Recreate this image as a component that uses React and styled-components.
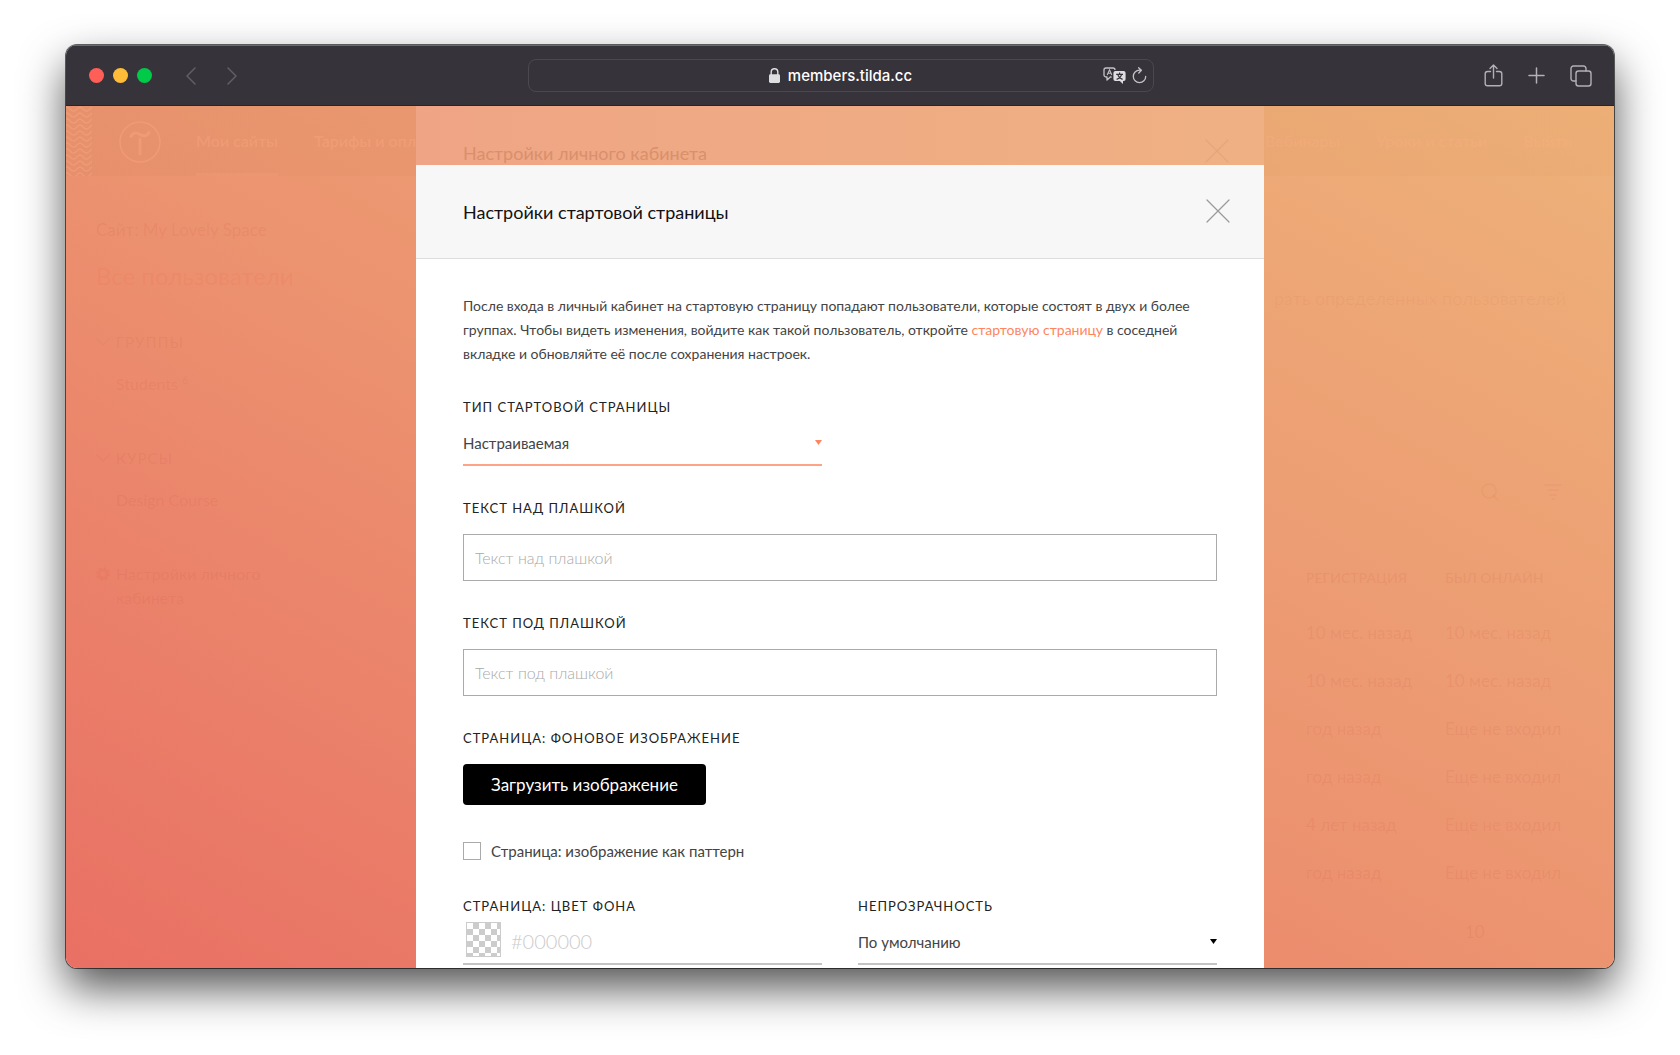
import React from 'react';
import styled, { createGlobalStyle } from 'styled-components';

const GlobalStyle = createGlobalStyle`
  * {
    box-sizing: border-box;
  }
  body {
    margin: 0;
    background-color: #fff;
    font-family: Lato, 'Noto Sans', sans-serif;
    font-size: 16px;
    color: #444;
  }
  button, input, select {
    font-family: inherit;
    margin: 0;
  }
`;

const Desktop = styled.div`
  min-height: 100vh;
  padding: 45px 66px 87px;
  display: flex;
  flex-direction: column;
`;

const BrowserWindow = styled.div`
  flex: 1;
  display: flex;
  flex-direction: column;
  border-radius: 11px;
  overflow: hidden;
  box-shadow: 0 0 0 1px rgba(0, 0, 0, 0.6), 0 20px 44px rgba(0, 0, 0, 0.68);
`;

/* Browser toolbar */

const Toolbar = styled.header`
  height: 61px;
  padding: 0 22px 0 23px;
  display: grid;
  grid-template-columns: 1fr minmax(200px, 626px) 1fr;
  align-items: center;
  background-color: #37333b;
  border-top: 1px solid #6c6a6e;
  border-bottom: 1px solid #29242a;
`;

const ToolbarSide = styled.div`
  display: flex;
  align-items: center;
  justify-content: ${(props) => props.$align || 'flex-start'};
  gap: ${(props) => props.$gap}px;
`;

const Lights = styled.div`
  display: flex;
  gap: 9px;
  margin-right: 5px;
`;

const Light = styled.span`
  width: 15px;
  height: 15px;
  border-radius: 50%;
  background-color: ${(props) => props.$color};
`;

const IconButton = styled.button`
  display: flex;
  padding: 0;
  border: none;
  background: none;
  color: ${(props) => props.$color || '#b3b0b6'};
  cursor: pointer;
`;

const AddressBar = styled.div`
  height: 33px;
  padding: 0 6px;
  display: grid;
  grid-template-columns: 1fr auto 1fr;
  align-items: center;
  border: 1px solid #4c4850;
  border-radius: 8px;
`;

const Address = styled.div`
  grid-column: 2;
  display: flex;
  align-items: center;
  gap: 8px;
  font-family: Inter, sans-serif;
  font-size: 15px;
  font-weight: 500;
  color: #fff;
`;

const AddressActions = styled.div`
  display: flex;
  align-items: center;
  justify-content: flex-end;
  gap: 6px;
`;

/* The page that shows faintly through the popup backdrop */

const Viewport = styled.div`
  flex: 1;
  display: grid;
  grid-template: 1fr / minmax(0, 1fr);
  background-image: linear-gradient(to top right, #e97064, #ec9470 50%, #eeb27a);
`;

const Page = styled.div`
  grid-area: 1 / 1;
  color: rgba(200, 66, 50, 0.1);
`;

const SiteHeader = styled.div`
  height: 70px;
  display: flex;
  align-items: center;
  background-image: linear-gradient(to right, rgba(195, 125, 75, 0.11), rgba(215, 140, 80, 0.08));
  color: rgba(255, 176, 138, 0.3);
`;

const SiteLogo = styled.a`
  display: flex;
  margin: 2px 35px 0 27px;
  color: inherit;
`;

const SiteNav = styled.nav`
  align-self: stretch;
  display: flex;
  gap: 36px;
  margin-left: ${(props) => props.$right && 'auto'};
  margin-right: ${(props) => props.$right && '42px'};
`;

const SiteLink = styled.a`
  display: flex;
  align-items: center;
  padding-top: 2px;
  border-bottom: 3px solid ${(props) => (props.$active ? 'rgba(255, 176, 138, 0.15)' : 'transparent')};
  color: inherit;
  font-size: 16px;
  font-weight: 600;
  text-decoration: none;
  white-space: nowrap;
`;

const PageColumns = styled.div`
  display: flex;
  justify-content: space-between;
`;

const Sidebar = styled.aside`
  width: 230px;
  padding: 42px 0 0 30px;
`;

const SiteName = styled.div`
  font-size: 17px;
  line-height: 24px;
`;

const SidebarTitle = styled.div`
  margin: 18px 0 38px;
  font-size: 24px;
  line-height: 32px;
  color: rgba(245, 95, 60, 0.12);
  white-space: nowrap;
`;

const SidebarGroup = styled.div`
  display: grid;
  grid-template-columns: 20px 1fr;
  row-gap: 18px;
  margin-bottom: 50px;
  line-height: 24px;

  svg {
    color: rgba(225, 75, 60, 0.08);
  }
`;

const GroupTitle = styled.div`
  font-size: 15px;
  letter-spacing: 1px;
`;

const GroupItem = styled.div`
  grid-column: 2;
  font-size: 16px;
`;

const GroupCount = styled.sup`
  margin-left: 4px;
  font-size: 11px;
  line-height: 1;
`;

const MemberList = styled.div`
  width: 350px;
  padding-top: 110px;
`;

const MemberHint = styled.div`
  line-height: 24px;
  font-size: 18px;
  text-align: right;
  white-space: nowrap;
  margin-right: 48px;
  color: rgba(200, 66, 50, 0.06);
`;

const MemberTools = styled.div`
  display: flex;
  justify-content: flex-end;
  gap: 45px;
  margin: 173px 52px 45px 0;
  color: rgba(200, 66, 50, 0.07);
`;

const MemberTable = styled.table`
  border-collapse: collapse;
  margin-left: 42px;
  font-size: 17px;
  white-space: nowrap;

  th {
    width: 139px;
    height: 62px;
    padding: 0;
    font-size: 14px;
    font-weight: 600;
    text-align: left;
  }
  td {
    height: 48px;
    padding: 0;
  }
`;

const PageNumber = styled.div`
  margin: 25px 0 0 201px;
  font-size: 17px;
`;

/* Popups */

const Overlay = styled.div`
  grid-area: 1 / 1;
  z-index: 1;
  display: flex;
  flex-direction: column;
  align-items: center;
`;

const BackPopup = styled.div`
  width: 100%;
  max-width: 848px;
  height: 59px;
  padding: 33px 35px 0 47px;
  display: flex;
  justify-content: space-between;
  overflow: hidden;
  background-image: linear-gradient(to right, #efa585, #efb183);
  color: #d9906c;
  font-size: 18px;
  line-height: 28px;

  svg {
    color: #e4a67c;
  }
`;

const Popup = styled.section`
  flex: 1;
  width: 100%;
  max-width: 848px;
  background-color: #fff;
`;

const PopupHeader = styled.div`
  height: 94px;
  padding: 0 34px 2px 47px;
  display: flex;
  align-items: center;
  justify-content: space-between;
  background-color: #f7f7f7;
  border-bottom: 1px solid #ddd;
`;

const PopupTitle = styled.h1`
  margin: 0;
  padding-top: 2px;
  font-size: 18px;
  font-weight: 400;
  color: #111;
`;

const PopupBody = styled.form`
  padding: 35px 47px 3px;
`;

const Intro = styled.p`
  margin: 0 0 31px;
  line-height: 24px;
  font-size: 14px;

  a {
    color: #ff855d;
    text-decoration: none;
  }
`;

const Field = styled.div`
  display: flex;
  flex-direction: column;
  align-items: flex-start;
  margin-bottom: ${(props) => (props.$last ? 0 : 32)}px;
`;

const FieldRow = styled.div`
  display: grid;
  grid-template-columns: 1fr 1fr;
  column-gap: 36px;
`;

const Label = styled.label`
  line-height: 20px;
  font-size: 13px;
  letter-spacing: 1px;
  text-transform: uppercase;
  color: #222;
`;

const Underlined = styled.div`
  width: 100%;
  height: 49px;
  display: grid;
  align-items: center;
  border-bottom: 2px solid ${(props) => (props.$accent ? '#ffa386' : '#c4c4c4')};
  color: ${(props) => (props.$accent ? '#ff855d' : '#000')};

  svg {
    grid-area: 1 / 1;
    justify-self: end;
    pointer-events: none;
    margin-top: 4px;
  }
`;

const Select = styled.select`
  grid-area: 1 / 1;
  width: 100%;
  height: 100%;
  padding: 5px 0 0;
  appearance: none;
  border: none;
  outline: none;
  background: none;
  font-size: 15px;
  color: #444;
`;

const TextInput = styled.input`
  width: 100%;
  height: 47px;
  margin-top: 16px;
  padding: 0 11px;
  border: 1px solid #aaa;
  border-radius: 0;
  outline: none;
  font-size: 16px;
  font-weight: 300;

  &::placeholder {
    color: #aaa;
  }
`;

const UploadButton = styled.button`
  height: 41px;
  margin-top: 16px;
  padding: 0 28px;
  border: none;
  border-radius: 4px;
  background-color: #000;
  color: #fff;
  font-size: 17px;
  cursor: pointer;
`;

const CheckRow = styled.label`
  display: flex;
  align-items: center;
  gap: 10px;
  height: 18px;
  margin: 37px 0 36px;
  font-size: 15px;
`;

const Checkbox = styled.input`
  width: 18px;
  height: 18px;
  appearance: none;
  border: 1px solid #aaa;
  background-color: #fff;

  &:checked {
    background-color: #ff855d;
  }
`;

const ColorControl = styled(Underlined)`
  grid-template-columns: auto 1fr;
  column-gap: 10px;
  padding-left: 3px;
`;

const Swatch = styled.button`
  width: 35px;
  height: 35px;
  padding: 0;
  border: 1px solid #ccc;
  background: conic-gradient(#ccc 25%, #fff 0 50%, #ccc 0 75%, #fff 0) 0 0 / 12px 12px;
`;

const ColorInput = styled.input`
  width: 100%;
  padding: 2px 0 0;
  border: none;
  outline: none;
  background: none;
  font-size: 20px;
  font-weight: 300;

  &::placeholder {
    color: #ccc;
  }
`;

const Stroke = ({ width, height, d, weight = 1.5, children }) => (
  <svg
    width={width}
    height={height}
    viewBox={`0 0 ${width} ${height}`}
    fill='none'
    stroke='currentColor'
    strokeWidth={weight}
    strokeLinecap='round'
    strokeLinejoin='round'
    aria-hidden='true'
  >
    {d && <path d={d} />}
    {children}
  </svg>
);

const CloseIcon = () => (
  <Stroke width={24} height={24} d='M1 1 L23 23 M23 1 L1 23' weight={1.2} />
);

const ArrowIcon = () => (
  <svg width='7' height='5' viewBox='0 0 7 5' aria-hidden='true'>
    <path d='M0 0 H7 L3.5 5 Z' fill='currentColor' />
  </svg>
);

const LockIcon = () => (
  <svg width='11' height='15' viewBox='0 0 11 15' aria-hidden='true'>
    <rect x='0' y='6.3' width='11' height='8.7' rx='1.4' fill='#dedde0' />
    <path d='M2.2 7 V4 a3.3 3.3 0 0 1 6.6 0 V7' fill='none' stroke='#dedde0' strokeWidth='1.4' />
  </svg>
);

const TranslateIcon = () => (
  <svg width='23' height='17' viewBox='0 0 23 17' fill='none' aria-hidden='true'>
    <path
      d='M8.6 10 H7.4 L4 13 V10 H3 a2 2 0 0 1 -2 -2 V3 a2 2 0 0 1 2 -2 H10 a2 2 0 0 1 2 2 V3'
      stroke='#c4c2c7'
      strokeWidth='1.3'
      strokeLinejoin='round'
    />
    <path d='M4.2 8 L6.5 2.8 L8.8 8 M5 6.3 H8' stroke='#c4c2c7' strokeWidth='1.1' />
    <path
      d='M12.4 4 H20.6 a2 2 0 0 1 2 2 V12 a2 2 0 0 1 -2 2 H20 V17 L16.8 14 H12.4 a2 2 0 0 1 -2 -2 V6 a2 2 0 0 1 2 -2 Z'
      fill='#dedde0'
    />
    <path d='M13.2 7.4 H20 M16.6 5.6 V7.4 M18.6 7.4 C18 9.8 16 11.6 13.6 12.4 M14.8 7.4 C15.4 9.8 17.4 11.6 19.6 12.4' stroke='#37333b' strokeWidth='1.2' />
  </svg>
);

const WavePattern = () => (
  <svg width='26' height='70' aria-hidden='true'>
    <defs>
      <pattern id='waves' width='13' height='6' patternUnits='userSpaceOnUse'>
        <path
          d='M-3 3.6 C-1 3.6 -1 1 1 1 C3.6 1 4.6 5 7.5 5 C10.4 5 11.4 1 14 1'
          fill='none'
          stroke='currentColor'
          strokeWidth='1.5'
        />
      </pattern>
    </defs>
    <rect width='26' height='70' fill='url(#waves)' />
  </svg>
);

const TildaLogo = () => (
  <Stroke width={42} height={42} weight={1.6}>
    <circle cx='21' cy='21' r='20' />
    <path d='M12 15.5 C14 11 17.5 11.5 21 13.5 C24.5 15.5 28 15.5 30 11.5 M21 18 V33' strokeWidth='3' />
  </Stroke>
);

const ChevronIcon = () => <Stroke width={14} height={24} d='M1 9 L7 15 L13 9' />;

const members = [
  ['10 мес. назад', '10 мес. назад'],
  ['10 мес. назад', '10 мес. назад'],
  ['год назад', 'Еще не входил'],
  ['год назад', 'Еще не входил'],
  ['4 лет назад', 'Еще не входил'],
  ['год назад', 'Еще не входил'],
];

const BrowserToolbar = () => (
  <Toolbar>
    <ToolbarSide $gap={27}>
      <Lights>
        <Light $color='#ff5f57' />
        <Light $color='#febc38' />
        <Light $color='#00ca48' />
      </Lights>
      <IconButton $color='#625e67' aria-label='Назад'>
        <Stroke width={14} height={18} d='M11 1 L3 9 L11 17' />
      </IconButton>
      <IconButton $color='#625e67' aria-label='Вперёд'>
        <Stroke width={14} height={18} d='M3 1 L11 9 L3 17' />
      </IconButton>
    </ToolbarSide>
    <AddressBar>
      <Address>
        <LockIcon />
        members.tilda.cc
      </Address>
      <AddressActions>
        <IconButton aria-label='Перевести'>
          <TranslateIcon />
        </IconButton>
        <IconButton $color='#c4c2c7' aria-label='Обновить'>
          <Stroke width={15} height={17} d='M8.5 3.2 H7.5 A6.2 6.2 0 1 0 13.7 9.4 M6.6 0.8 L9.4 3.3 L6.8 6' weight={1.3} />
        </IconButton>
      </AddressActions>
    </AddressBar>
    <ToolbarSide $gap={25} $align='flex-end'>
      <IconButton aria-label='Поделиться'>
        <Stroke
          width={19}
          height={23}
          d='M6.5 7.5 H3.5 a2.3 2.3 0 0 0 -2.3 2.3 V19.5 a2.3 2.3 0 0 0 2.3 2.3 H15.5 a2.3 2.3 0 0 0 2.3 -2.3 V9.8 a2.3 2.3 0 0 0 -2.3 -2.3 H12.5 M9.5 14 V1.2 M6 4.6 L9.5 1.1 L13 4.6'
          weight={1.4}
        />
      </IconButton>
      <IconButton aria-label='Новая вкладка'>
        <Stroke width={17} height={17} d='M8.5 1 V16 M1 8.5 H16' />
      </IconButton>
      <IconButton aria-label='Все вкладки'>
        <Stroke width={22} height={22} weight={1.4}>
          <rect x='6' y='6' width='15' height='15' rx='2.5' />
          <path d='M6 16 H3.5 A2.5 2.5 0 0 1 1 13.5 V3.5 A2.5 2.5 0 0 1 3.5 1 H13.5 A2.5 2.5 0 0 1 16 3.5 V6' />
        </Stroke>
      </IconButton>
    </ToolbarSide>
  </Toolbar>
);

const MembersPage = () => (
  <Page>
    <SiteHeader>
      <WavePattern />
      <SiteLogo href='#' aria-label='Tilda'>
        <TildaLogo />
      </SiteLogo>
      <SiteNav>
        <SiteLink href='#' $active>Мои сайты</SiteLink>
        <SiteLink href='#'>Тарифы и оплата</SiteLink>
      </SiteNav>
      <SiteNav $right>
        <SiteLink href='#'>Вебинары</SiteLink>
        <SiteLink href='#'>Уроки и статьи</SiteLink>
        <SiteLink href='#'>Выйти</SiteLink>
      </SiteNav>
    </SiteHeader>
    <PageColumns>
      <Sidebar>
        <SiteName>Сайт: My Lovely Space</SiteName>
        <SidebarTitle>Все пользователи</SidebarTitle>
        <SidebarGroup>
          <ChevronIcon />
          <GroupTitle>ГРУППЫ</GroupTitle>
          <GroupItem>
            Students<GroupCount>6</GroupCount>
          </GroupItem>
        </SidebarGroup>
        <SidebarGroup>
          <ChevronIcon />
          <GroupTitle>КУРСЫ</GroupTitle>
          <GroupItem>Design Course</GroupItem>
        </SidebarGroup>
        <SidebarGroup>
          <Stroke width={14} height={24} weight={3}>
            <circle cx='7' cy='12' r='4' />
            <circle cx='7' cy='12' r='6' strokeWidth='2' strokeDasharray='2 2.7' strokeLinecap='butt' />
          </Stroke>
          <GroupItem>Настройки личного кабинета</GroupItem>
        </SidebarGroup>
      </Sidebar>
      <MemberList>
        <MemberHint>рать определенных пользователей</MemberHint>
        <MemberTools>
          <Stroke width={18} height={18} d='M12.5 12.5 L17 17'>
            <circle cx='8' cy='8' r='7' />
          </Stroke>
          <Stroke width={18} height={18} d='M1 2 H17 M4 7 H14 M6 12 H12 M8 16 H10' />
        </MemberTools>
        <MemberTable>
          <thead>
            <tr>
              <th>РЕГИСТРАЦИЯ</th>
              <th>БЫЛ ОНЛАЙН</th>
            </tr>
          </thead>
          <tbody>
            {members.map(([registered, online], index) => (
              <tr key={index}>
                <td>{registered}</td>
                <td>{online}</td>
              </tr>
            ))}
          </tbody>
        </MemberTable>
        <PageNumber>10</PageNumber>
      </MemberList>
    </PageColumns>
  </Page>
);

const StartPagePopup = () => (
  <Popup>
    <PopupHeader>
      <PopupTitle>Настройки стартовой страницы</PopupTitle>
      <IconButton $color='#999' aria-label='Закрыть'>
        <CloseIcon />
      </IconButton>
    </PopupHeader>
    <PopupBody>
      <Intro>
        После входа в личный кабинет на стартовую страницу попадают пользователи, которые
        состоят в двух и более группах. Чтобы видеть изменения, войдите как такой
        пользователь, откройте <a href='#'>стартовую страницу</a> в соседней вкладке и
        обновляйте её после сохранения настроек.
      </Intro>
      <FieldRow>
        <Field>
          <Label htmlFor='type'>Тип стартовой страницы</Label>
          <Underlined $accent>
            <Select id='type'>
              <option>Настраиваемая</option>
            </Select>
            <ArrowIcon />
          </Underlined>
        </Field>
      </FieldRow>
      <Field>
        <Label htmlFor='above'>Текст над плашкой</Label>
        <TextInput id='above' type='text' placeholder='Текст над плашкой' />
      </Field>
      <Field>
        <Label htmlFor='below'>Текст под плашкой</Label>
        <TextInput id='below' type='text' placeholder='Текст под плашкой' />
      </Field>
      <Field>
        <Label htmlFor='upload'>Страница: фоновое изображение</Label>
        <UploadButton id='upload' type='button'>Загрузить изображение</UploadButton>
      </Field>
      <CheckRow>
        <Checkbox type='checkbox' />
        Страница: изображение как паттерн
      </CheckRow>
      <FieldRow>
        <Field $last>
          <Label htmlFor='color'>Страница: цвет фона</Label>
          <ColorControl>
            <Swatch type='button' aria-label='Выбрать цвет' />
            <ColorInput id='color' type='text' placeholder='#000000' />
          </ColorControl>
        </Field>
        <Field $last>
          <Label htmlFor='opacity'>Непрозрачность</Label>
          <Underlined>
            <Select id='opacity'>
              <option>По умолчанию</option>
            </Select>
            <ArrowIcon />
          </Underlined>
        </Field>
      </FieldRow>
    </PopupBody>
  </Popup>
);

const App = () => {
  return (
    <Desktop>
      <GlobalStyle />
      <BrowserWindow>
        <BrowserToolbar />
        <Viewport>
          <MembersPage />
          <Overlay>
            <BackPopup>
              Настройки личного кабинета
              <CloseIcon />
            </BackPopup>
            <StartPagePopup />
          </Overlay>
        </Viewport>
      </BrowserWindow>
    </Desktop>
  );
};

export default App;
